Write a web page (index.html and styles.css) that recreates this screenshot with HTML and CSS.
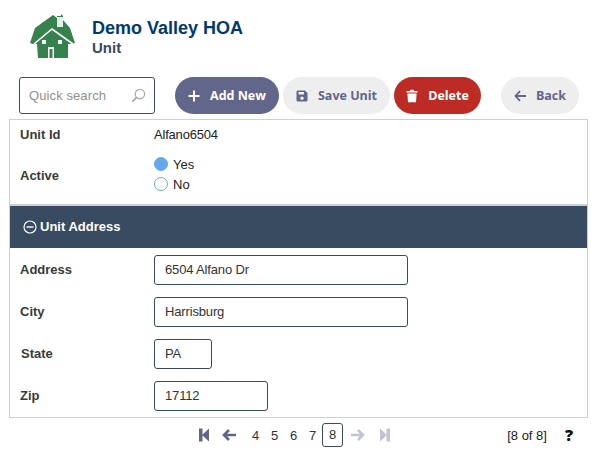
FILE: index.html
```html
<!DOCTYPE html>
<html lang="en">
<head>
  <meta charset="UTF-8">
  <title>Unit</title>
  <link rel="stylesheet" href="styles.css">
</head>
<body>
  <header class="page-header">
    <svg class="logo" viewBox="0 0 46 46" width="46" height="46">
      <path fill="#35824d" d="M23 1 L27 4 V2 H31 V0 L33 2 V6 L40 14 L45 29 L42 30 L38 30 V44 H8 L7 30 L3 30 L0 29 L5 14 Z"/>
      <path d="M4 30 L22 15 L43 30" fill="none" stroke="#fff" stroke-width="1.6"/>
      <rect x="27" y="3" width="6" height="10" fill="#e4efe7"/>
      <rect x="12" y="26" width="4" height="4" fill="#fff"/>
      <rect x="28" y="26" width="4" height="4" fill="#fff"/>
      <path fill="#fff" d="M18 44 V33 H24 V44 H22.5 V35 H19.5 V44 Z"/>
    </svg>
    <div class="titles">
      <h1>Demo Valley HOA</h1>
      <h2>Unit</h2>
    </div>
  </header>

  <div class="toolbar">
    <div class="search">
      <span class="search-text">Quick search</span>
      <svg viewBox="0 0 16 16" width="15" height="15"><circle cx="9.5" cy="6.5" r="5" fill="none" stroke="#a9a9a9" stroke-width="1.3"/><path d="M6 10 L1.5 14.5" stroke="#a9a9a9" stroke-width="2"/></svg>
    </div>
    <button class="btn btn-add">
      <svg viewBox="0 0 12 12" width="12" height="12"><path d="M6 0.5 V11.5 M0.5 6 H11.5" stroke="#fff" stroke-width="2"/></svg>
      Add New
    </button>
    <button class="btn btn-save">
      <svg viewBox="0 0 12 12" width="12" height="12"><path fill="#62668a" fill-rule="evenodd" d="M1.5 0.5 H9 L11.5 3 V10 A1.5 1.5 0 0 1 10 11.5 H2 A1.5 1.5 0 0 1 0.5 10 V2 A1.5 1.5 0 0 1 1.5 0.5 Z M2.5 2 V4.5 H8 V2 Z M6 6.5 A1.8 1.8 0 1 0 6 10.1 A1.8 1.8 0 1 0 6 6.5 Z"/></svg>
      Save Unit
    </button>
    <button class="btn btn-delete">
      <svg viewBox="0 0 12 14" width="12" height="14"><path fill="#fff" d="M0.5 2 H4 L4.5 0.8 H7.5 L8 2 H11.5 V3.4 H0.5 Z M1.4 4.4 H10.6 L10 13.2 H2 Z"/></svg>
      Delete
    </button>
    <button class="btn btn-back">
      <svg viewBox="0 0 12 12" width="12" height="12"><path d="M6 1.2 L1.5 6 L6 10.8 M2 6 H12" fill="none" stroke="#62668a" stroke-width="1.8"/></svg>
      Back
    </button>
  </div>

  <main class="panel">
    <div class="top-fields">
      <div class="row row-id">
        <label class="field-label">Unit Id</label>
        <span class="value">Alfano6504</span>
      </div>
      <div class="row row-active">
        <label class="field-label">Active</label>
        <div class="radios">
          <div class="radio-line"><span class="radio checked"></span>Yes</div>
          <div class="radio-line"><span class="radio"></span>No</div>
        </div>
      </div>
    </div>

    <div class="section-band">
      <svg viewBox="0 0 14 14" width="14" height="14"><circle cx="7" cy="7" r="6" fill="none" stroke="#fff" stroke-width="1.2"/><path d="M3.5 7 H10.5" stroke="#fff" stroke-width="1.4"/></svg>
      <span class="band-title">Unit Address</span>
    </div>

    <div class="address-fields">
      <div class="row input-row">
        <label class="field-label">Address</label>
        <input class="input w-long" type="text" value="6504 Alfano Dr">
      </div>
      <div class="row input-row">
        <label class="field-label">City</label>
        <input class="input w-long" type="text" value="Harrisburg">
      </div>
      <div class="row input-row">
        <label class="field-label state-label">State</label>
        <input class="input w-state" type="text" value="PA">
      </div>
      <div class="row input-row">
        <label class="field-label">Zip</label>
        <input class="input w-zip" type="text" value="17112">
      </div>
    </div>
  </main>

  <footer class="pager">
    <svg class="pg-icon" viewBox="0 0 12 14" width="12" height="14"><path fill="#62668a" d="M1 0.5 H4.5 V13.5 H1 Z M4 7 L11 0.5 V13.5 Z"/></svg>
    <svg class="pg-icon prev" viewBox="0 0 14 12" width="14" height="12"><path d="M7 1 L2 6 L7 11 M2.5 6 H14" fill="none" stroke="#62668a" stroke-width="2.6"/></svg>
    <span class="pg-num">4</span>
    <span class="pg-num">5</span>
    <span class="pg-num">6</span>
    <span class="pg-num">7</span>
    <span class="pg-num current">8</span>
    <svg class="pg-icon next" viewBox="0 0 14 12" width="14" height="12"><path d="M7 1 L12 6 L7 11 M11.5 6 H0" fill="none" stroke="#c3c4d3" stroke-width="2.6"/></svg>
    <svg class="pg-icon" viewBox="0 0 12 14" width="12" height="14"><path fill="#c3c4d3" d="M11 0.5 H7.5 V13.5 H11 Z M8 7 L1 0.5 V13.5 Z"/></svg>
    <span class="pg-count">[8 of 8]</span>
    <span class="pg-help">?</span>
  </footer>
</body>
</html>
```

FILE: styles.css
```css
body {
  margin: 0;
  font-family: "Liberation Sans", Arial, sans-serif;
  font-size: 13px;
  color: #222;
  background: #fff;
}
.page-header {
  display: flex;
  align-items: center;
  height: 77px;
  padding-left: 30px;
  box-sizing: border-box;
  padding-bottom: 4px;
}
.logo {
  margin-right: 16px;
}
.titles {
  padding-top: 1px;
}
h1 {
  margin: 0;
  font-size: 18px;
  line-height: 22px;
  color: #003a70;
}
h2 {
  margin: 0;
  font-size: 15px;
  line-height: 18px;
  color: #3a4a5c;
}
.toolbar {
  display: flex;
  align-items: stretch;
  height: 37px;
  padding-left: 19px;
  margin-bottom: 5px;
}
.search {
  display: flex;
  align-items: center;
  justify-content: space-between;
  width: 136px;
  box-sizing: border-box;
  border: 1px solid #394b60;
  border-radius: 3px;
  padding: 0 8px 0 9px;
  margin-right: 20px;
}
.search-text {
  font-size: 13px;
  letter-spacing: 0.1px;
  color: #8f8f8f;
}
.btn {
  display: flex;
  align-items: center;
  justify-content: center;
  gap: 10px;
  height: 37px;
  padding: 0;
  border: none;
  border-radius: 19px;
  font-family: "Open Sans", sans-serif;
  font-size: 12.5px;
  font-weight: 700;
}
.btn-add {
  width: 104px;
  margin-right: 4px;
  background: #62668a;
  color: #fff;
}
.btn-save {
  width: 107px;
  margin-right: 4px;
  background: #eeeeee;
  color: #62668a;
}
.btn-delete {
  width: 87px;
  margin-right: 20px;
  background: #bc2c25;
  color: #fff;
}
.btn-back {
  width: 78px;
  background: #eeeeee;
  color: #62668a;
}
.panel {
  width: 579px;
  margin-left: 9px;
  box-sizing: border-box;
  border: 1px solid #cfcfcf;
}
.top-fields {
  height: 86px;
  box-sizing: border-box;
  border-bottom: 2px solid #cfcfcf;
}
.row {
  display: flex;
  align-items: center;
}
.field-label {
  width: 134px;
  padding-left: 10px;
  box-sizing: border-box;
  font-size: 13px;
  font-weight: 700;
  color: #3a3a3a;
  flex-shrink: 0;
}
.state-label {
  padding-left: 11px;
}
.row-id {
  height: 29px;
}
.value {
  font-size: 13px;
  letter-spacing: -0.2px;
  color: #222;
  margin-left: 10px;
}
.row-active {
  height: 54px;
  margin-top: -1px;
}
.radios {
  margin-left: 10px;
  margin-bottom: 2px;
  font-size: 13px;
}
.radio-line {
  display: flex;
  align-items: center;
  height: 20px;
}
.radio {
  width: 14px;
  height: 14px;
  box-sizing: border-box;
  border-radius: 50%;
  border: 1px solid #64aaea;
  margin-right: 5px;
}
.radio.checked {
  background: #64aaea;
}
.section-band {
  display: flex;
  align-items: center;
  gap: 3px;
  height: 42px;
  padding-left: 13px;
  background: #394b60;
  color: #fff;
  font-size: 13px;
  font-weight: 700;
}
.band-title {
  margin-bottom: 2px;
}
.address-fields {
  padding: 7px 0 6px;
  display: flex;
  flex-direction: column;
  gap: 12px;
}
.input-row {
  height: 30px;
}
.input-row .field-label {
  margin-bottom: 2px;
}
.input {
  height: 30px;
  box-sizing: border-box;
  margin-left: 10px;
  padding: 0 10px 2px;
  border: 1px solid #394b60;
  border-radius: 3px;
  font-family: "Liberation Sans", Arial, sans-serif;
  font-size: 13px;
  letter-spacing: -0.15px;
  color: #333;
}
.w-long {
  width: 254px;
}
.w-state {
  width: 58px;
}
.w-zip {
  width: 114px;
}
.pager {
  display: flex;
  align-items: center;
  height: 24px;
  margin-top: 5px;
  padding-left: 198px;
  font-size: 13px;
}
.pg-icon.prev {
  margin-left: 12px;
  margin-right: 10px;
}
.pg-icon.next {
  margin-left: 8px;
  margin-right: 14px;
}
.pg-num {
  width: 19px;
  text-align: center;
  color: #333;
}
.pg-num.current {
  width: 21px;
  height: 24px;
  box-sizing: border-box;
  line-height: 22px;
  border: 1px solid #394b60;
  border-radius: 3px;
}
.pg-count {
  margin-left: auto;
  color: #222;
}
.pg-help {
  margin-left: 18px;
  margin-right: 20px;
  font-family: "Open Sans", sans-serif;
  font-size: 16px;
  font-weight: 800;
  color: #111;
}
```
